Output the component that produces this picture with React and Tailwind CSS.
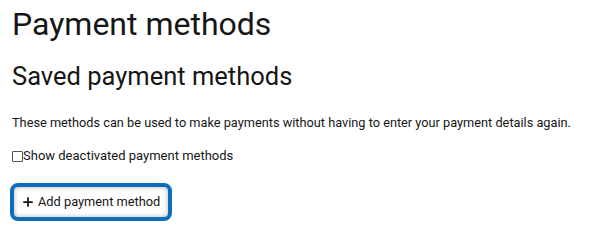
import { Plus } from "lucide-react";

const App = () => {
  return (
    <div className="bg-white px-3 pt-[4px] text-[#161616] font-['Roboto',sans-serif]">
      <h1 className="text-[32px] leading-[40px] font-normal">Payment methods</h1>
      <h2 className="mt-[16px] text-[25.5px] leading-[32px] font-normal">Saved payment methods</h2>
      <p className="mt-[21px] whitespace-nowrap text-[12.75px] leading-[20px]">
        These methods can be used to make payments without having to enter your payment details again.
      </p>
      <label className="mt-[13px] flex items-center text-[13px] leading-[20px]">
        <input type="checkbox" className="m-0 h-[11px] w-[11px] appearance-none rounded-[1px] border border-[#555] bg-white" />
        <span>Show deactivated payment methods</span>
      </label>
      <div className="mt-[17px] -ml-[2px]">
        <button className="flex h-[38px] items-center gap-[3px] rounded-[8px] border-[4px] border-[#0a6ebd] bg-white pl-[7px] pr-[8px] text-[12.8px] text-[#161616] shadow-[inset_0_0_5px_rgba(0,0,0,0.3)]">
          <Plus size={14} strokeWidth={3} />
          Add payment method
        </button>
      </div>
    </div>
  );
};

export default App;
